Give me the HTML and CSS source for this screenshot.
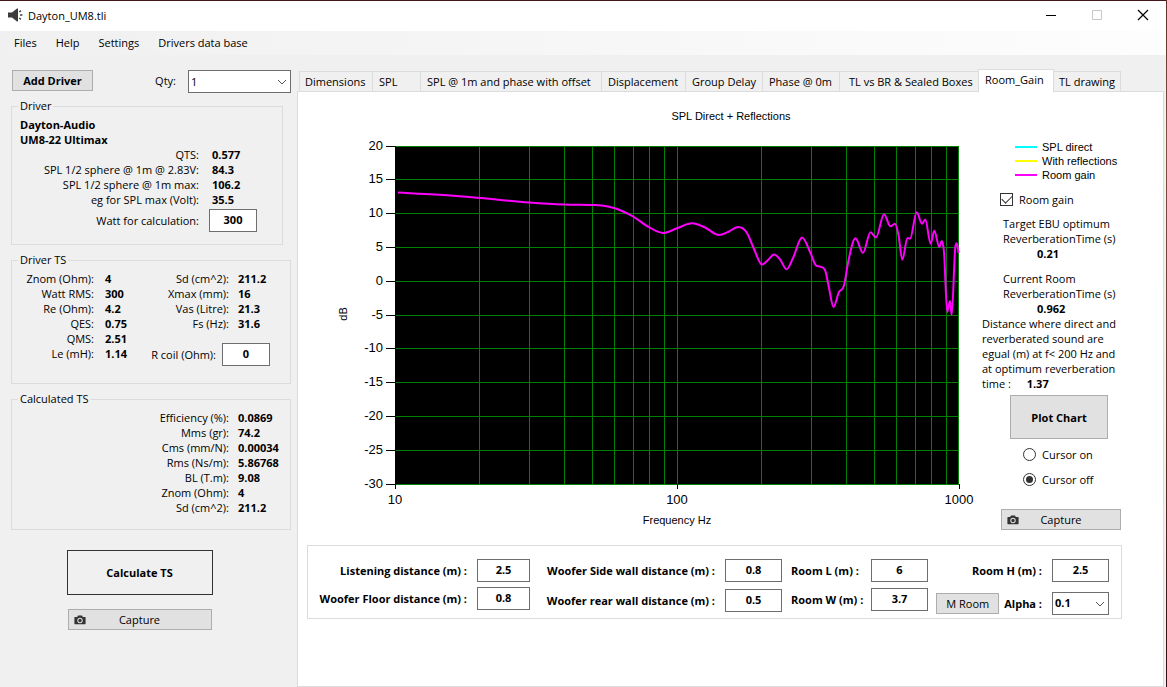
FILE: index.html
```html
<!DOCTYPE html>
<html lang="en">
<head>
<meta charset="utf-8">
<title>Dayton_UM8.tli</title>
<link rel="stylesheet" href="styles.css">
</head>
<body>
<div class="window">
  <header class="titlebar">
    <svg class="app-icon" width="16" height="14" viewBox="0 0 16 14" aria-hidden="true">
      <path fill="#3c3c3c" d="M0 4.5h4L9 0.5h1v13H9L4 9.5H0z"/>
      <path stroke="#3c3c3c" stroke-width="1.4" d="M11.3 4l1.6-1.4M12 7h2.4M11.3 10l1.6 1.4" fill="none"/>
    </svg>
    <span class="title">Dayton_UM8.tli</span>
    <div class="window-controls">
      <button type="button" aria-label="Minimize"><svg width="12" height="12" viewBox="0 0 12 12"><path d="M1 6.5h10" stroke="#000"/></svg></button>
      <button type="button" aria-label="Maximize" disabled><svg width="12" height="12" viewBox="0 0 12 12"><path d="M1.5 1.5h9v9h-9z" stroke="#c8c8c8" fill="none"/></svg></button>
      <button type="button" aria-label="Close"><svg width="12" height="12" viewBox="0 0 12 12"><path d="M1 1l10 10M11 1L1 11" stroke="#000" stroke-width="1.2"/></svg></button>
    </div>
  </header>
  <nav class="menubar">
    <button type="button">Files</button>
    <button type="button">Help</button>
    <button type="button">Settings</button>
    <button type="button">Drivers data base</button>
  </nav>

  <main class="content">
    <aside class="sidebar">
      <div class="driver-bar">
        <button type="button" class="btn strong add-driver">Add Driver</button>
        <label for="qty">Qty:</label>
        <span class="select qty">
          <select id="qty"><option>1</option></select>
          <svg width="10" height="6" viewBox="0 0 10 6" aria-hidden="true"><path d="M1 1l4 4 4-4" stroke="#555" fill="none"/></svg>
        </span>
      </div>

      <fieldset class="group driver">
        <legend>Driver</legend>
        <div class="driver-name">Dayton-Audio<br>UM8-22 Ultimax</div>
        <dl class="specs">
          <dt>QTS:</dt><dd>0.577</dd>
          <dt>SPL 1/2 sphere @ 1m @ 2.83V:</dt><dd>84.3</dd>
          <dt>SPL 1/2 sphere @ 1m max:</dt><dd>106.2</dd>
          <dt>eg for SPL max (Volt):</dt><dd>35.5</dd>
        </dl>
        <div class="field watt">
          <label for="watt">Watt for calculation:</label>
          <input id="watt" type="text" value="300">
        </div>
      </fieldset>

      <fieldset class="group driver-ts">
        <legend>Driver TS</legend>
        <dl class="specs">
          <dt>Znom (Ohm):</dt><dd>4</dd>
          <dt>Watt RMS:</dt><dd>300</dd>
          <dt>Re (Ohm):</dt><dd>4.2</dd>
          <dt>QES:</dt><dd>0.75</dd>
          <dt>QMS:</dt><dd>2.51</dd>
          <dt>Le (mH):</dt><dd>1.14</dd>
        </dl>
        <div>
          <dl class="specs">
            <dt>Sd (cm^2):</dt><dd>211.2</dd>
            <dt>Xmax (mm):</dt><dd>16</dd>
            <dt>Vas (Litre):</dt><dd>21.3</dd>
            <dt>Fs (Hz):</dt><dd>31.6</dd>
          </dl>
          <div class="field coil">
            <label for="coil">R coil (Ohm):</label>
            <input id="coil" type="text" value="0">
          </div>
        </div>
      </fieldset>

      <fieldset class="group calculated">
        <legend>Calculated TS</legend>
        <dl class="specs">
          <dt>Efficiency (%):</dt><dd>0.0869</dd>
          <dt>Mms (gr):</dt><dd>74.2</dd>
          <dt>Cms (mm/N):</dt><dd>0.00034</dd>
          <dt>Rms (Ns/m):</dt><dd>5.86768</dd>
          <dt>BL (T.m):</dt><dd>9.08</dd>
          <dt>Znom (Ohm):</dt><dd>4</dd>
          <dt>Sd (cm^2):</dt><dd>211.2</dd>
        </dl>
      </fieldset>

      <div class="actions">
        <button type="button" class="btn strong calculate">Calculate TS</button>
        <button type="button" class="btn capture">
          <svg width="12" height="10" viewBox="0 0 12 10" aria-hidden="true"><path fill="#333" fill-rule="evenodd" d="M1 2h2.2L4 .6h4L8.800 2H11q.6 0 .6.6v6q0 .6-.6.6H1q-.6 0-.6-.6v-6Q.4 2 1 2zm5 .8a2.700 2.700 0 1 0 0 5.400 2.700 2.700 0 0 0 0-5.400zm0 1a1.700 1.700 0 1 1 0 3.400 1.700 1.700 0 0 1 0-3.400z"/><circle cx="6" cy="5.500" r=".8" fill="#333"/></svg>
          <span>Capture</span>
        </button>
      </div>
    </aside>

    <section class="workspace">
      <div class="tabs" role="tablist">
        <button type="button" role="tab">Dimensions</button>
        <button type="button" role="tab">SPL</button>
        <button type="button" role="tab">SPL @ 1m and phase with offset</button>
        <button type="button" role="tab">Displacement</button>
        <button type="button" role="tab">Group Delay</button>
        <button type="button" role="tab">Phase @ 0m</button>
        <button type="button" role="tab" class="indent">TL vs BR &amp; Sealed Boxes</button>
        <button type="button" role="tab" aria-selected="true">Room_Gain</button>
        <button type="button" role="tab">TL drawing</button>
      </div>

      <div class="page" role="tabpanel">
        <div class="plot-row">
          <svg class="chart" id="chart" viewBox="0 0 684 438" role="img" aria-label="SPL Direct + Reflections">
            <text class="caption" x="433" y="28">SPL Direct + Reflections</text>
            <rect x="97" y="54" width="564" height="339" fill="#000"/>
            <g id="grid" class="grid"></g>
            <path id="curve" class="curve"/>
            <g id="axis" class="axis"></g>
            <text class="caption" x="379" y="432">Frequency Hz</text>
            <text class="caption" transform="translate(49 222) rotate(-90)">dB</text>
          </svg>

          <div class="panel">
            <ul class="legend">
              <li class="direct">SPL direct</li>
              <li class="reflections">With reflections</li>
              <li class="gain">Room gain</li>
            </ul>
            <label class="check"><input type="checkbox" checked>Room gain</label>
            <div class="reading">Target EBU optimum<br>ReverberationTime (s)<b>0.21</b></div>
            <div class="reading">Current Room<br>ReverberationTime (s)<b>0.962</b></div>
            <p class="note">Distance where direct and<br>reverberated sound are<br>egual (m) at f&lt; 200 Hz and<br>at optimum reverberation<br>time : <b>1.37</b></p>
            <button type="button" class="btn strong plot">Plot Chart</button>
            <label class="radio"><input type="radio" name="cursor">Cursor on</label>
            <label class="radio"><input type="radio" name="cursor" checked>Cursor off</label>
            <button type="button" class="btn capture">
              <svg width="12" height="10" viewBox="0 0 12 10" aria-hidden="true"><path fill="#333" fill-rule="evenodd" d="M1 2h2.200L4 .6h4L8.800 2H11q.6 0 .6.6v6q0 .6-.6.6H1q-.6 0-.6-.6v-6Q.4 2 1 2zm5 .8a2.700 2.700 0 1 0 0 5.400 2.700 2.700 0 0 0 0-5.400zm0 1a1.700 1.700 0 1 1 0 3.400 1.700 1.700 0 0 1 0-3.400z"/><circle cx="6" cy="5.500" r=".8" fill="#333"/></svg>
              <span>Capture</span>
            </button>
          </div>
        </div>

        <form class="params">
          <div class="pair listening">
            <label for="listen">Listening distance (m) :</label><input id="listen" type="text" value="2.5">
            <label for="floor">Woofer Floor distance (m) :</label><input id="floor" type="text" value="0.8">
          </div>
          <div class="pair walls">
            <label for="side">Woofer Side wall distance (m) :</label><input id="side" type="text" value="0.8">
            <label for="rear">Woofer rear wall distance (m) :</label><input id="rear" type="text" value="0.5">
          </div>
          <div class="pair room">
            <label for="rl">Room L (m) :</label><input id="rl" type="text" value="6">
            <label for="rw">Room W (m) :</label><input id="rw" type="text" value="3.7">
          </div>
          <div class="pair height">
            <label for="rh">Room H (m) :</label><input id="rh" type="text" value="2.5">
            <div class="alpha">
              <button type="button" class="btn">M Room</button>
              <label for="alpha">Alpha :</label>
            </div>
            <span class="select">
              <select id="alpha"><option>0.1</option></select>
              <svg width="10" height="6" viewBox="0 0 10 6" aria-hidden="true"><path d="M1 1l4 4 4-4" stroke="#555" fill="none"/></svg>
            </span>
          </div>
        </form>
      </div>
    </section>
  </main>
</div>
<script src="chart.js"></script>
</body>
</html>
```

FILE: styles.css
```css
* { box-sizing: border-box; }

body {
  margin: 0;
  font: 11px/15px "Segoe UI", "Open Sans", "Noto Sans", sans-serif;
  color: #000;
  background: linear-gradient(#5a3028, #80503c 20%, #5f3222 60%, #2a0f14);
}

button, input, select { font: inherit; color: inherit; }

.window {
  display: flex;
  flex-direction: column;
  min-height: 100vh;
  margin-right: 1px;
  border-top: 1px solid #43161a;
  background: #f0f0f0;
}

.titlebar {
  display: flex;
  align-items: center;
  height: 30px;
  padding: 0 0 2px 8px;
  background: #fff;
}
.title { margin-left: 4px; }
.window-controls { display: flex; margin-left: auto; }
.window-controls button {
  display: flex;
  align-items: center;
  justify-content: center;
  width: 46px;
  height: 28px;
  padding: 0;
  border: 0;
  background: none;
}

.menubar {
  display: flex;
  align-items: center;
  height: 24px;
  padding: 0 0 2px 6px;
  background: linear-gradient(90deg, #f0f0f0, #fdfdfd);
}
.menubar button { padding: 0 8px; margin-right: 3px; border: 0; background: none; }

.content { display: flex; flex: 1; }

/* Shared controls */
.btn {
  display: inline-flex;
  align-items: center;
  justify-content: center;
  height: 21px;
  padding: 0;
  border: 1px solid #adadad;
  background: #e1e1e1;
}
.strong { font-weight: 700; }
.capture { position: relative; }
.capture svg { position: absolute; left: 5px; top: 5px; }

input[type="text"] {
  width: 100%;
  height: 23px;
  padding: 0 0 2px;
  border: 1px solid #6e6e6e;
  background: #fff;
  font-weight: 700;
  text-align: center;
}

.select { position: relative; display: block; }
.select select {
  display: block;
  width: 100%;
  height: 23px;
  padding: 0 2px 2px;
  border: 1px solid #6e6e6e;
  border-radius: 0;
  background: #fff;
  appearance: none;
}
.select svg { position: absolute; right: 4px; top: 9px; pointer-events: none; }

/* Sidebar */
.sidebar { width: 297px; padding: 15px 6px 0 11px; }
.driver-bar { display: flex; margin-bottom: 5px; line-height: 22px; }
.add-driver { width: 81px; margin: 0 auto 0 1px; }
.driver-bar label { margin-right: 12px; }
.qty { width: 103px; }

.group { min-width: 0; margin: 0 0 7px; padding: 3px 7px 0 8px; border: 1px solid #dcdcdc; }
.group legend { height: 16px; margin-left: -2px; padding: 0 2px; }
.driver { margin-right: 8px; padding-bottom: 12px; }
.driver-name { font-weight: 700; }

.specs { display: grid; grid-template-columns: 1fr 45px; align-content: start; column-gap: 9px; margin: 0; }
.specs dt { text-align: right; white-space: nowrap; }
.specs dd { margin: 0; font-weight: 700; }
.driver .specs { grid-template-columns: 1fr 63px; column-gap: 13px; }

.field { display: flex; align-items: center; justify-content: flex-end; }
.field input { width: 48px; }
.watt { gap: 10px; margin: 2px 18px 0 0; }
.coil { gap: 6px; margin: 12px 13px 0 0; }

.driver-ts { display: grid; grid-template-columns: 119px 1fr; padding-bottom: 17px; }
.driver-ts > .specs { grid-template-columns: 74px 1fr; column-gap: 11px; }
.calculated { padding-bottom: 14px; margin-bottom: 20px; }

.actions { display: flex; flex-direction: column; align-items: center; gap: 14px; padding-right: 23px; }
.calculate { width: 146px; height: 45px; border-color: #333; background: #f0f0f0; }
.actions .capture { width: 144px; }

/* Tabs */
.workspace { display: flex; flex: 1; flex-direction: column; min-width: 0; padding: 14px 2px 0 0; }
.tabs {
  display: grid;
  grid-template-columns: 74px 48px 181px 84px 77px 77px 138px 76px 67px;
  align-items: end;
  margin-left: 2px;
}
.tabs button {
  height: 20px;
  padding: 0 0 0 6px;
  border: 1px solid #dcdcdc;
  border-width: 1px 1px 0 0;
  background: #f0f0f0;
  text-align: left;
  white-space: nowrap;
}
.tabs button:first-child { padding-left: 5px; border-left-width: 1px; }
.tabs button:last-child { padding-left: 5px; }
.tabs .indent { padding-left: 9px; border-right: 0; }
.tabs [aria-selected] {
  z-index: 1;
  height: 23px;
  margin-bottom: -1px;
  padding: 0 0 3px 6px;
  border-left-width: 1px;
  background: #fff;
}

.page { flex: 1; padding-bottom: 20px; border: 1px solid #dcdcdc; background: #fff; }

/* Chart */
.plot-row { display: flex; align-items: flex-start; margin-right: 41px; }
.chart { flex: 1; min-width: 0; font-family: Arial, "Liberation Sans", sans-serif; }
.caption { font-size: 11px; text-anchor: middle; }
.grid { stroke: #008000; shape-rendering: crispEdges; }
.curve { fill: none; stroke: #f0f; stroke-width: 2; }
.axis { font-size: 13px; }
.axis path { stroke: #000; shape-rendering: crispEdges; }
.axis .x { text-anchor: middle; }
.axis .y { text-anchor: end; }

.panel { display: flex; flex-direction: column; width: 140px; padding-top: 48px; white-space: nowrap; }
.legend {
  margin: 0 0 10px 33px;
  padding: 0;
  font: 11px/14px Arial, "Liberation Sans", sans-serif;
  list-style: none;
}
.legend li { display: flex; align-items: center; gap: 5px; }
.legend li::before { content: ""; width: 22px; height: 2px; }
.legend .direct::before { background: #0ff; }
.legend .reflections::before { background: #ff0; }
.legend .gain::before { background: #f0f; }

.check, .radio { display: flex; align-items: center; gap: 6px; }
.check input, .radio input {
  display: grid;
  place-items: center;
  width: 13px;
  height: 13px;
  margin: 0;
  border: 1px solid #333;
  background: #fff;
  appearance: none;
}
.check { margin: 0 0 9px 18px; }
.check input:checked::before {
  content: "";
  width: 9px;
  height: 5px;
  margin-bottom: 3px;
  border: solid #333;
  border-width: 0 0 1px 1px;
  transform: rotate(-45deg);
}
.radio { margin: 8px 0 2px 41px; }
.radio input { border-radius: 50%; }
.radio input:checked::before { content: ""; width: 7px; height: 7px; border-radius: 50%; background: #333; }

.reading { margin: 0 0 10px 21px; }
.reading b { display: block; padding-left: 34px; }
.reading + .reading { margin-bottom: 0; }
.note { margin: 0 0 4px; }
.note b { margin-left: 13px; }
.plot { width: 98px; height: 44px; margin-left: 28px; }
.panel .capture { width: 120px; margin: 20px 0 0 19px; }

/* Room parameters */
.params {
  display: grid;
  grid-template-columns: 222fr 252fr 146fr 181fr;
  margin: 15px 41px 0 9px;
  padding: 13px 12px 3px 0;
  border: 1px solid #dcdcdc;
  font-weight: 700;
}
.pair { display: grid; align-content: start; align-items: center; column-gap: 10px; white-space: nowrap; }
.pair label { text-align: right; }
.listening { grid-template-columns: 1fr 53px; row-gap: 5px; }
.walls { grid-template-columns: 1fr 57px; row-gap: 7px; }
.room { grid-template-columns: 1fr 57px; column-gap: 2px; row-gap: 6px; padding-left: 9px; }
.room label { text-align: left; }
.height { grid-template-columns: 1fr 57px; row-gap: 10px; }
.alpha { display: flex; align-items: center; justify-content: flex-end; gap: 5px; }
.alpha .btn { width: 63px; font-weight: 400; }
```

FILE: chart.js
```js
const LEFT = 97, TOP = 54, WIDTH = 564, HEIGHT = 338;
const DECADE = WIDTH / 2;

// Room gain trace, in plot coordinates
const trace = [
  [3, 46.5], [40, 48.5], [85, 52], [134, 56.5], [169, 58.5], [197, 59], [207, 59.4], [219, 62],
  [238, 70.5], [254, 81.2], [268, 87], [282, 82.3], [297, 77.3], [310, 81.5], [324, 89],
  [333, 86], [343, 81], [352, 87], [359, 103], [367, 118.5], [373, 114], [379, 108.6],
  [385, 113.3], [391.5, 123.3], [398, 112], [407, 91.5], [415.5, 107], [421, 119.5],
  [425, 120.6], [430, 124], [434, 142], [438.5, 161], [444, 146], [449, 139.5], [453, 117],
  [460.5, 92.3], [468, 106.8], [475.5, 86.3], [481, 91.5], [489, 68.3], [495.5, 80.3],
  [500, 77.7], [503.5, 89], [507.3, 113.7], [512.5, 92], [515, 92.8], [521.7, 66.3],
  [527, 77.8], [530.3, 73.6], [535.6, 97.7], [539.3, 84.7], [544.3, 101], [546.8, 95],
  [549, 106], [552.2, 166], [555, 155], [556.7, 169], [560.3, 101], [561.7, 97.3], [563.7, 107]
];

// Monotone cubic through the points, so peaks and dips stay at the samples
function smooth(points) {
  const n = points.length;
  const step = [], slope = [];
  for (let i = 0; i < n - 1; i++) {
    step.push(points[i + 1][0] - points[i][0]);
    slope.push((points[i + 1][1] - points[i][1]) / step[i]);
  }
  const m = points.map((p, i) => {
    if (i === 0) return slope[0];
    if (i === n - 1) return slope[n - 2];
    const a = slope[i - 1], b = slope[i];
    if (a * b <= 0) return 0;
    const mean = (a * step[i] + b * step[i - 1]) / (step[i] + step[i - 1]);
    return Math.sign(a) * Math.min(Math.abs(mean), 3 * Math.abs(a), 3 * Math.abs(b));
  });
  let d = `M${LEFT + points[0][0]} ${TOP + points[0][1]}`;
  for (let i = 0; i < n - 1; i++) {
    const [x0, y0] = points[i], [x1, y1] = points[i + 1];
    const h = step[i] / 3;
    d += `C${LEFT + x0 + h} ${TOP + y0 + m[i] * h} ${LEFT + x1 - h} ${TOP + y1 - m[i + 1] * h} ${LEFT + x1} ${TOP + y1}`;
  }
  return d;
}

let grid = "", axis = "";
for (let i = 0; i <= 10; i++) {
  const y = Math.floor(TOP + HEIGHT * i / 10) + 0.5;
  grid += `<path d="M${LEFT + 1} ${y}H${LEFT + WIDTH}"/>`;
  axis += `<path d="M${LEFT - 9} ${y}H${LEFT}"/><text class="y" x="${LEFT - 12}" y="${y + 3}">${20 - i * 5}</text>`;
}
for (let decade = 0; decade < 2; decade++) {
  for (let k = 2; k <= 10; k++) {
    const x = Math.min(Math.floor(LEFT + 0.1 + DECADE * (decade + Math.log10(k))), LEFT + WIDTH - 1) + 0.5;
    grid += `<path d="M${x} ${TOP}V${TOP + HEIGHT}"/>`;
  }
}
[10, 100, 1000].forEach((f, i) => {
  const x = LEFT + DECADE * i;
  axis += `<path d="M${x + 0.5} ${TOP + HEIGHT}v5"/><text class="x" x="${x}" y="${TOP + HEIGHT + 20}">${f}</text>`;
});

document.getElementById("grid").innerHTML = grid;
document.getElementById("axis").innerHTML = axis;
document.getElementById("curve").setAttribute("d", smooth(trace));
```
